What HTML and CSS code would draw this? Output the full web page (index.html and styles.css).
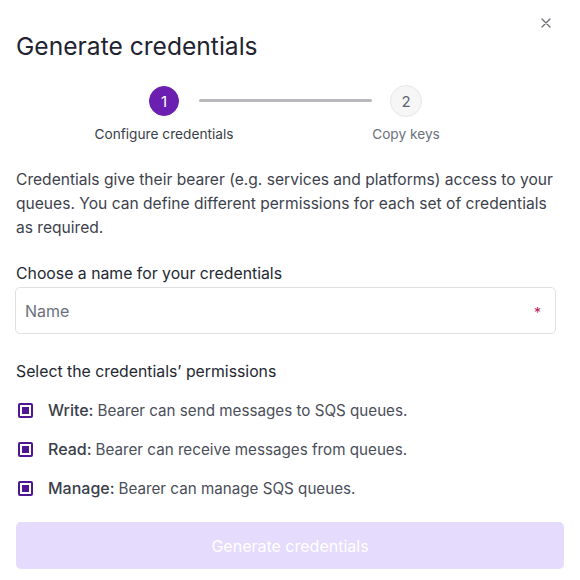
FILE: index.html
```html
<!DOCTYPE html>
<html>
<head>
<meta charset="utf-8">
<link rel="stylesheet" href="styles.css">
</head>
<body>
<div class="dialog">
  <button class="close" aria-label="Close">
    <svg width="10" height="10" viewBox="0 0 10 10"><path d="M1 1L9 9M9 1L1 9" stroke="#6b6f7a" stroke-width="1.3" stroke-linecap="round"/></svg>
  </button>
  <h1 class="title">Generate credentials</h1>
  <div class="stepper">
    <div class="step step-one">
      <div class="circle active">1</div>
      <div class="step-label">Configure credentials</div>
    </div>
    <div class="step-line"></div>
    <div class="step step-two">
      <div class="circle">2</div>
      <div class="step-label muted">Copy keys</div>
    </div>
  </div>
  <p class="intro">Credentials give their bearer (e.g. services and platforms) access to your queues. You can define different permissions for each set of credentials as required.</p>
  <div class="field-label">Choose a name for your credentials</div>
  <div class="input">
    <span class="placeholder">Name</span>
    <span class="required">*</span>
  </div>
  <div class="field-label perms-label">Select the credentials’ permissions</div>
  <ul class="perms">
    <li class="perm"><span class="check"></span><span class="perm-name">Write:</span><span class="perm-desc">Bearer can send messages to SQS queues.</span></li>
    <li class="perm"><span class="check"></span><span class="perm-name">Read:</span><span class="perm-desc">Bearer can receive messages from queues.</span></li>
    <li class="perm"><span class="check"></span><span class="perm-name">Manage:</span><span class="perm-desc">Bearer can manage SQS queues.</span></li>
  </ul>
  <button class="submit">Generate credentials</button>
</div>
</body>
</html>
```
FILE: styles.css
```css
* { box-sizing: border-box; }
html, body { margin: 0; padding: 0; background: #fff; }
body { font-family: Inter, "Noto Sans", sans-serif; color: #2b2f3a; }
.dialog { position: relative; width: 580px; padding: 30px 16px 0 16px; }
.close {
  position: absolute; top: 17px; right: 28px;
  width: 12px; height: 12px; padding: 0; border: 0; background: none;
  display: flex; align-items: center; justify-content: center;
}
.title { margin: 0; font-size: 24.6px; line-height: 32px; font-weight: 400; color: #1f2430; }
.stepper { display: flex; align-items: flex-start; margin-top: 24px; margin-left: 78px; }
.step { display: flex; flex-direction: column; align-items: center; }
.step-one { width: 140px; }
.step-two { width: 70px; }
.circle {
  width: 30px; height: 30px; border-radius: 50%;
  display: flex; align-items: center; justify-content: center;
  font-size: 15px; color: #5f6370; background: #f6f6f7; border: 1px solid #e6e6e9;
}
.circle.active { background: #6b1fb1; border-color: #6b1fb1; color: #fff; }
.step-two .circle { width: 32px; height: 32px; margin-top: -1px; margin-bottom: -1px; }
.step-line { width: 173px; height: 3px; border-radius: 2px; background: #b7b8bc; margin: 13px -1px 0 -35px; }
.step-label { margin-top: 8px; font-size: 13.7px; line-height: 20px; color: #3a3e48; white-space: nowrap; }
.step-label.muted { color: #6d717c; }
.intro { margin: 24px 0 0 0; font-size: 15.6px; line-height: 24px; color: #3d424d; }
.field-label { margin-top: 24px; font-size: 15.8px; line-height: 20px; font-weight: 400; color: #242832; }
.input {
  margin-top: 3px; width: 541px; margin-left: -1px; height: 47px;
  border: 1px solid #dfe0e3; border-radius: 5px;
  display: flex; align-items: center; justify-content: space-between;
  padding: 0 14px 0 9px;
}
.placeholder { font-size: 16px; color: #6b6f7a; }
.required { color: #c2185b; font-size: 14px; margin-top: 4px; }
.perms-label { margin-top: 28px; }
.perms { list-style: none; margin: 16px 0 0 0; padding: 0; display: flex; flex-direction: column; gap: 15px; }
.perm { display: flex; align-items: center; height: 24px; font-size: 15.2px; color: #3d424d; }
.check {
  width: 15px; height: 15px; margin-left: 2px; margin-right: 15px;
  border: 2px solid #4e1791; border-radius: 2px; padding: 2px; background: #fff;
  box-shadow: inset 0 0 0 2px #fff, inset 0 0 0 10px #4e1791;
}
.perm-name { font-size: 16px; font-weight: 500; color: #3a3e48; margin-right: 4px; }
.perm-desc { color: #4a4e59; }
.submit {
  display: block; margin-top: 22px; width: 548px; height: 47px;
  border: 0; border-radius: 5px; background: #e4dbfd; color: #fff;
  font-family: Inter, "Noto Sans", sans-serif; font-size: 16px;
}
```
